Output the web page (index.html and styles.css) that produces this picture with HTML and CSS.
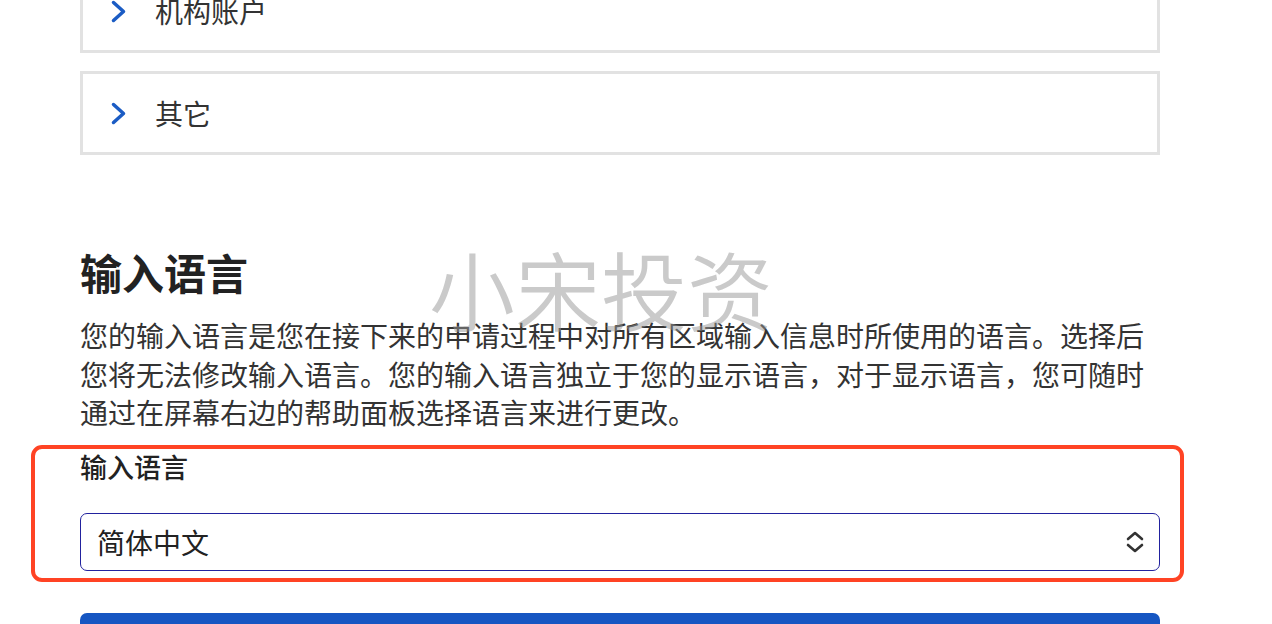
FILE: index.html
```html
<!DOCTYPE html>
<html lang="zh-CN">
<head>
  <meta charset="UTF-8">
  <meta name="viewport" content="width=device-width, initial-scale=1.0">
  <title>输入语言</title>
  <link rel="stylesheet" href="styles.css">
</head>
<body>

  <div class="page">
    <div class="accordion">
      <div class="acc-item">
        <svg class="chev" width="15" height="23" viewBox="0 0 15 23"><polyline points="2.5,2.5 12.5,11.5 2.5,20.5" /></svg>
        <span>机构账户</span>
      </div>
      <div class="acc-item">
        <svg class="chev" width="15" height="23" viewBox="0 0 15 23"><polyline points="2.5,2.5 12.5,11.5 2.5,20.5" /></svg>
        <span>其它</span>
      </div>
    </div>

    <div class="lang-section">
      <h2>输入语言</h2>
      <p class="desc">您的输入语言是您在接下来的申请过程中对所有区域输入信息时所使用的语言。选择后您将无法修改输入语言。您的输入语言独立于您的显示语言，对于显示语言，您可随时通过在屏幕右边的帮助面板选择语言来进行更改。</p>

      <div class="field">
        <label class="field-label">输入语言</label>
        <div class="select-box">
          <span>简体中文</span>
          <svg class="updown" width="20" height="22" viewBox="0 0 20 22"><polyline points="3,8 10,2 17,8" /><polyline points="3,14 10,20 17,14" /></svg>
        </div>
        <div class="highlight"></div>
      </div>

      <div class="watermark">小宋投资</div>
    </div>

    <button class="next-btn" type="button"></button>
  </div>

</body>
</html>
```

FILE: styles.css
```css
body {
  margin: 0;
  padding: 0;
  background-color: #fff;
  font-family: "Noto Sans CJK SC", "Noto Sans", sans-serif;
  color: #333;
}
.page {
  width: 1080px;
  margin: -31px 0 0 80px;
}
.accordion {
  display: flex;
  flex-direction: column;
  gap: 18px;
}
.acc-item {
  height: 78px;
  border: 3px solid #e2e2e2;
  display: flex;
  align-items: center;
  padding-left: 28px;
  font-size: 28px;
  color: #333;
}
.acc-item span {
  margin-left: 29px;
}
.chev polyline {
  fill: none;
  stroke: #1b5cc4;
  stroke-width: 3.5;
  stroke-linecap: round;
  stroke-linejoin: round;
}
.lang-section {
  position: relative;
  padding-top: 93px;
}
h2 {
  margin: 0;
  font-size: 42px;
  line-height: 48px;
  font-weight: 700;
  color: #222;
}
.desc {
  margin: 20px 0 0;
  font-size: 28px;
  line-height: 38.5px;
  color: #333;
}
.field {
  position: relative;
  margin-top: 16px;
}
.field-label {
  display: block;
  font-size: 27px;
  line-height: 38px;
  font-weight: 500;
  color: #222;
}
.select-box {
  margin-top: 27px;
  height: 56px;
  border: 1px solid #22229e;
  border-radius: 7px;
  display: flex;
  align-items: center;
  justify-content: space-between;
  padding: 0 14px 0 16px;
  font-size: 28px;
  color: #222;
}
.updown polyline {
  fill: none;
  stroke: #333;
  stroke-width: 2.6;
  stroke-linecap: round;
  stroke-linejoin: round;
}
.highlight {
  position: absolute;
  left: -49px;
  right: -24px;
  top: -3px;
  bottom: -11px;
  border: 4px solid #ff4324;
  border-radius: 11px;
  pointer-events: none;
}
.watermark {
  position: absolute;
  left: 349px;
  top: 90px;
  font-size: 86px;
  line-height: 1;
  font-weight: 350;
  color: rgba(150, 150, 150, 0.5);
  pointer-events: none;
}
.next-btn {
  display: block;
  width: 100%;
  height: 60px;
  margin-top: 42px;
  background-color: #1656c2;
  border: none;
  border-radius: 7px;
}
```
